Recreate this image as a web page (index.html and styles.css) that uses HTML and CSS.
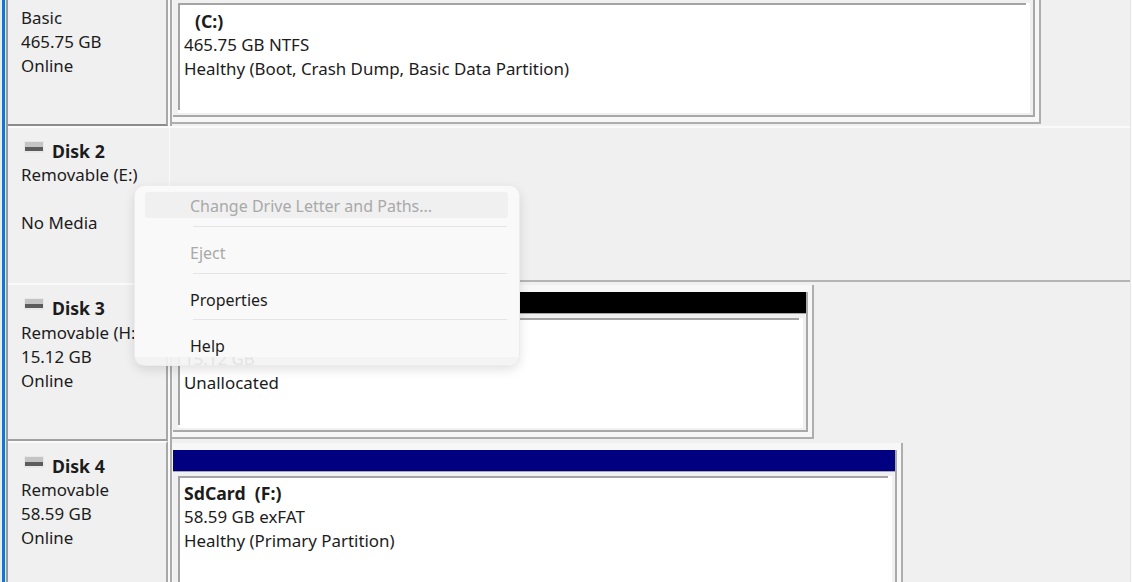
FILE: index.html
```html
<!DOCTYPE html>
<html lang="en">
<head>
<meta charset="utf-8">
<title>Disk Management</title>
<link rel="stylesheet" href="styles.css">
</head>
<body>
<main class="app">
  <section class="disk disk-first">
    <div class="label label-ruled">
      <div class="title"><svg class="drive" viewBox="0 0 22 14"><rect x="1" y="1" width="20" height="12" fill="#e8e8e8"/><rect x="2" y="2" width="18" height="5" fill="#c4c4c4"/><rect x="2" y="7" width="18" height="4" fill="#5c5c5c"/></svg><b>Disk 1</b></div>
      <div>Basic</div>
      <div>465.75 GB</div>
      <div>Online</div>
    </div>
    <div class="graph">
      <div class="part part-wide">
        <div class="bar bar-blue"></div>
        <div class="vol-wrap"><div class="vol">
          <div class="name name-indent">(C:)</div>
          <div>465.75 GB NTFS</div>
          <div>Healthy (Boot, Crash Dump, Basic Data Partition)</div>
        </div></div>
      </div>
    </div>
  </section>

  <section class="disk disk-empty">
    <div class="label">
      <div class="title"><svg class="drive" viewBox="0 0 22 14"><rect x="1" y="1" width="20" height="12" fill="#e8e8e8"/><rect x="2" y="2" width="18" height="5" fill="#c4c4c4"/><rect x="2" y="7" width="18" height="4" fill="#5c5c5c"/></svg><b>Disk 2</b></div>
      <div>Removable (E:)</div>
      <div>&nbsp;</div>
      <div>No Media</div>
    </div>
    <div class="graph"></div>
  </section>

  <section class="disk">
    <div class="label label-ruled">
      <div class="title"><svg class="drive" viewBox="0 0 22 14"><rect x="1" y="1" width="20" height="12" fill="#e8e8e8"/><rect x="2" y="2" width="18" height="5" fill="#c4c4c4"/><rect x="2" y="7" width="18" height="4" fill="#5c5c5c"/></svg><b>Disk 3</b></div>
      <div>Removable (H:)</div>
      <div>15.12 GB</div>
      <div>Online</div>
    </div>
    <div class="graph">
      <div class="part part-mid">
        <div class="bar bar-black"></div>
        <div class="vol-wrap"><div class="vol">
          <div class="name">&nbsp;</div>
          <div>15.12 GB</div>
          <div>Unallocated</div>
        </div></div>
      </div>
    </div>
  </section>

  <section class="disk">
    <div class="label">
      <div class="title"><svg class="drive" viewBox="0 0 22 14"><rect x="1" y="1" width="20" height="12" fill="#e8e8e8"/><rect x="2" y="2" width="18" height="5" fill="#c4c4c4"/><rect x="2" y="7" width="18" height="4" fill="#5c5c5c"/></svg><b>Disk 4</b></div>
      <div>Removable</div>
      <div>58.59 GB</div>
      <div>Online</div>
    </div>
    <div class="graph">
      <div class="part part-small">
        <div class="bar bar-blue"></div>
        <div class="vol-wrap"><div class="vol">
          <div class="name">SdCard&nbsp;&nbsp;(F:)</div>
          <div>58.59 GB exFAT</div>
          <div>Healthy (Primary Partition)</div>
        </div></div>
      </div>
    </div>
  </section>

  <nav class="menu">
    <div class="menu-body">
      <div class="item item-disabled item-hover">Change Drive Letter and Paths...</div>
      <div class="rule"></div>
      <div class="item item-disabled">Eject</div>
      <div class="rule"></div>
      <div class="item">Properties</div>
      <div class="rule"></div>
      <div class="item">Help</div>
    </div>
    <div class="menu-foot"></div>
  </nav>
</main>
</body>
</html>
```
FILE: styles.css
```css
* { box-sizing: border-box; }
html, body { margin: 0; height: 100%; overflow: hidden; }
body {
  font-family: "Noto Sans", "Open Sans", sans-serif;
  font-size: 16.9px;
  line-height: 24px;
  color: #1c1c1c;
  background: #f0f0f0;
}
.app {
  position: relative;
  height: 582px;
  overflow: hidden;
  padding-left: 8px;
  padding-right: 2px;
  background: linear-gradient(90deg, #ececec 0 2px, #0a78d4 2px 5px, #e8e8e8 5px 6px, #9a9a9a 6px 8px, #f0f0f0 8px calc(100% - 2px), #e6e6e6 calc(100% - 2px) calc(100% - 1px), #fafafa calc(100% - 1px));
}
.disk { display: flex; height: 158px; }
.disk-first { margin-top: -32px; }
.disk-empty { height: 157px; border-top: 2px solid #fafafa; }
.label {
  flex: 0 0 160px;
  padding: 12px 0 0 13px;
  border-top: 2px solid #fafafa;
  border-right: 2px solid #a8a8a8;
  margin-right: 2px;
  box-shadow: 2px 0 0 #fafafa;
}
.label-ruled { border-bottom: 2px solid #a0a0a0; }
.disk-first .label { border-bottom-color: #8c8c8c; }
.disk-empty .label { border: 0; padding-top: 11px; box-shadow: 1px 0 0 #fafafa; flex-basis: 161px; }
.title { display: flex; align-items: center; gap: 7px; margin: -1px 0 1px; }
.disk-empty .title { margin: 0; }
section:last-of-type .title { margin-bottom: 0; }
.drive { width: 22px; height: 14px; margin: -9px 0 0 2px; flex: none; }
.title b { font-weight: 700; font-size: 17.7px; }
.graph { flex: 1; border-left: 2px solid #ababab; min-width: 0; }
.disk-empty .graph { border-left: 0; border-bottom: 2px solid #b4b4b4; margin-bottom: 1px; }
.part {
  height: 154px;
  margin-top: 2px;
  padding: 7px 4px 5px 0;
  background: #f7f7f7;
  border-right: 2px solid #aeaeae;
  border-bottom: 2px solid #aeaeae;
}
.part-wide { width: 869px; }
.part-mid { width: 642px; }
.part-small { width: 731px; }
.bar { height: 21px; margin-left: 1px; border-right: 2px solid #a8a8a8; }
.bar-blue { background: #000080; }
.bar-black { background: #000; }
.vol-wrap {
  height: 119px;
  margin-left: 1px;
  padding: 4px 3px 4px 5px;
  background: #f0f0f0;
  border-top: 1px solid #a8a8a8;
  border-right: 2px solid #a8a8a8;
  border-bottom: 2px solid #a8a8a8;
}
.vol {
  height: 110px;
  padding: 5px 0 0 6px;
  white-space: nowrap;
  overflow: hidden;
  background:
    linear-gradient(#a4a4a4, #a4a4a4) 0 0 / calc(100% - 4px) 2px no-repeat,
    linear-gradient(#a4a4a4, #a4a4a4) 0 0 / 2px calc(100% - 3px) no-repeat,
    #fff;
}
.disk-first .vol { padding-top: 6px; }
.name { font-weight: 700; font-size: 17.7px; }
.name-indent { padding-left: 11px; }
.menu {
  position: absolute;
  left: 135px;
  top: 186px;
  width: 384px;
  height: 179px;
  display: flex;
  flex-direction: column;
  border-radius: 9px;
  overflow: hidden;
  font-size: 16px;
  box-shadow: 0 0 0 1px #ececec, 0 4px 12px rgba(0, 0, 0, .13);
}
.menu-body { flex: 1; padding: 6px 11px 0 10px; background: #f9f9f9; overflow: hidden; }
.menu-foot { height: 8px; background: rgba(243, 243, 243, .92); }
.item { height: 26px; padding-left: 45px; line-height: 28px; margin-bottom: 7.75px; }
.item-disabled { color: #a9a9a9; }
.item-hover { background: #f0f0f0; border-radius: 3px; }
.rule { height: 1px; margin: 0 1px 12px 48px; background: #e4e4e4; }
```
